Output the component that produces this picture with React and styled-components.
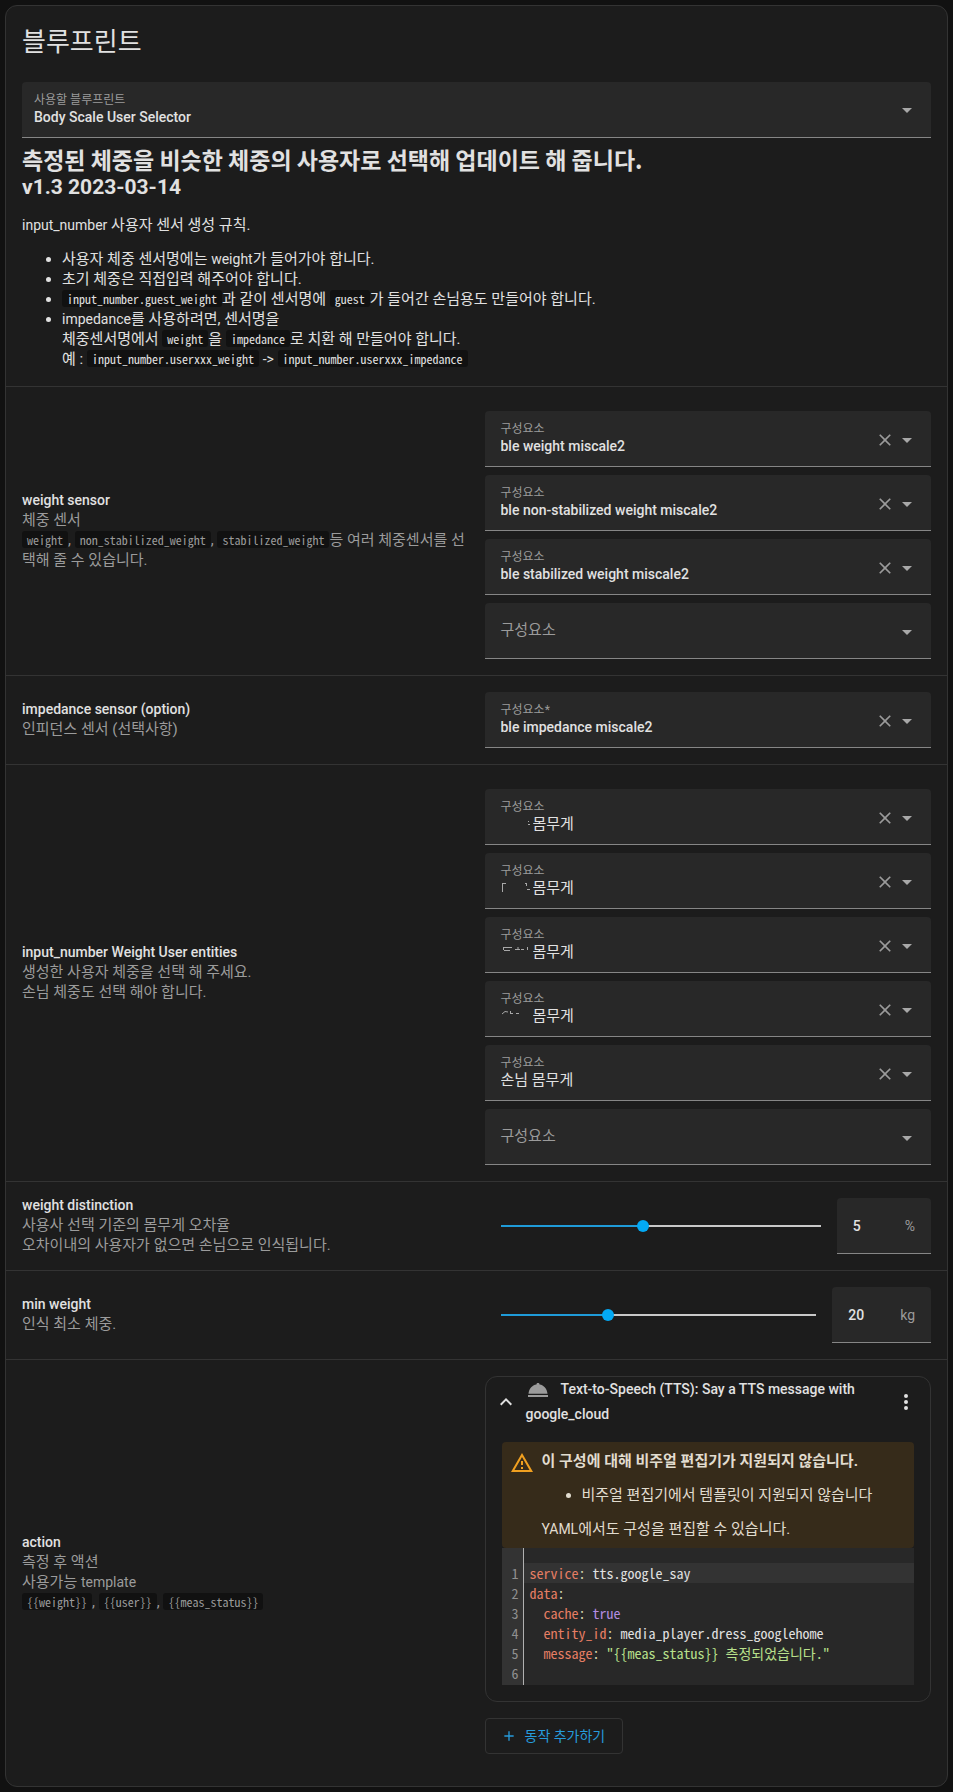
import React, { useId, useState } from "react";
import styled, { createGlobalStyle, css } from "styled-components";

const GlobalStyle = createGlobalStyle`
  *, *::before, *::after { box-sizing: border-box; }
  body {
    margin: 0;
    background: #111111;
    color: #e1e1e1;
    font-family: Roboto, "Noto Sans CJK KR", sans-serif;
    font-size: 14px;
    line-height: 20px;
  }
  button, input, select { font: inherit; color: inherit; }
`;

const Page = styled.main`
  padding: 5px;
`;

const Card = styled.section`
  background: #1c1c1c;
  border: 1px solid #333333;
  border-radius: 12px;
  overflow: hidden;
`;

const CardTitle = styled.h1`
  margin: 0;
  padding: 12px 16px 16px;
  font-size: 26px;
  line-height: 48px;
  font-weight: 400;
`;

const Intro = styled.div`
  padding: 0 16px 3px;
`;

const Heading = styled.h2`
  margin: 7px 0 14px;
  font-size: 21px;
  line-height: 28px;
  font-weight: 700;
`;

const HeadingKo = styled.span`
  display: block;
  font-family: "Noto Sans CJK KR", sans-serif;
  font-size: 23px;
`;

const Paragraph = styled.p`
  margin: 0;
  font-size: 15px;
`;

const BulletList = styled.ul`
  margin: 14px 0;
  padding-left: 40px;
  font-size: 15px;
`;

const Latin = styled.span`
  font-size: 14px;
`;

const Code = styled.code`
  padding: 0 5px;
  border-radius: 3px;
  background: #111111;
  font-family: "Noto Sans Mono CJK KR", "Liberation Mono", monospace;
  font-size: 12px;
  line-height: 16px;
`;

const Row = styled.div`
  display: grid;
  grid-template-columns: minmax(0, 1fr) minmax(0, 1fr);
  column-gap: 16px;
  align-items: center;
  padding: 0 16px;
  border-top: 1px solid #333333;
`;

const RowTitle = styled.h3`
  margin: 0;
  font-size: 14px;
  line-height: 20px;
  font-weight: 500;
`;

const RowText = styled.div`
  color: #9b9b9b;
  font-size: 15px;
`;

const FieldList = styled.div`
  display: grid;
  gap: 8px;
  padding: ${(p) => (p.$single ? 16 : 24)}px 0 16px;
`;

const Description = styled.div`
  padding-bottom: 2px;
`;

const Field = styled.div`
  display: flex;
  align-items: center;
  height: 56px;
  padding: 0 12px 0 ${(p) => (p.$inset ? 12 : 16)}px;
  background: #282828;
  border-bottom: 1px solid #868686;
  border-radius: 4px 4px 0 0;
`;

const FieldText = styled.div`
  flex: 1;
  min-width: 0;
  display: grid;
  align-content: center;
  ${(p) =>
    p.$empty
      ? css`
          padding-bottom: 2px;
          & > * {
            grid-area: 1 / 1;
          }
        `
      : css`
          padding-top: 1px;
        `}
`;

const FieldLabel = styled.label`
  color: #9b9b9b;
  font-size: ${(p) => (p.$large ? 15 : 12)}px;
  line-height: ${(p) => (p.$large ? 20 : 14)}px;
  pointer-events: none;
`;

const ValueRow = styled.div`
  display: flex;
  align-items: center;
`;

const Select = styled.select`
  appearance: none;
  flex: 1;
  min-width: 0;
  height: 20px;
  padding: 0;
  border: 0;
  outline: 0;
  background: transparent;
  font-size: ${(p) => (p.$korean ? 15 : 14)}px;
  line-height: 20px;
  font-weight: ${(p) => (p.$korean ? 400 : 500)};
`;

const Adornments = styled.div`
  display: flex;
  align-items: center;
  padding-top: ${(p) => (p.$inset ? 0 : 2)}px;
`;

const IconButton = styled.button`
  display: flex;
  align-items: center;
  justify-content: center;
  flex: none;
  padding: 0;
  border: 0;
  background: none;
  color: ${(p) => p.$color || "#9b9b9b"};
`;

const Svg = styled.svg`
  display: block;
  flex: none;
  fill: currentColor;
  color: ${(p) => p.$color || "inherit"};
`;

const icons = {
  menuDown: "M7,10L12,15L17,10H7Z",
  close:
    "M19,6.41L17.59,5L12,10.59L6.41,5L5,6.41L10.59,12L5,17.59L6.41,19L12,13.41L17.59,19L19,17.59L13.41,12L19,6.41Z",
  chevronUp: "M7.41,15.41L12,10.83L16.59,15.41L18,14L12,8L6,14L7.41,15.41Z",
  dots: "M12,16A2,2 0 0,1 14,18A2,2 0 0,1 12,20A2,2 0 0,1 10,18A2,2 0 0,1 12,16M12,10A2,2 0 0,1 14,12A2,2 0 0,1 12,14A2,2 0 0,1 10,12A2,2 0 0,1 12,10M12,4A2,2 0 0,1 14,6A2,2 0 0,1 12,8A2,2 0 0,1 10,6A2,2 0 0,1 12,4Z",
  alert: "M12,2L1,21H23M12,6L19.53,19H4.47M11,10V14H13V10M11,16V18H13V16",
  bell: "M12 5C13.1 5 13.7 5.6 13.5 6.6C18 7.2 21 11 21.5 15.8H2.5C3 11 6 7.2 10.5 6.6C10.3 5.6 10.9 5 12 5ZM2 17H22V19H2Z",
  plus: "M19,13H13V19H11V13H5V11H11V5H13V11H19V13Z",
};

function Icon({ name, size = 24, color }) {
  return (
    <Svg width={size} height={size} viewBox="0 0 24 24" $color={color} aria-hidden="true">
      <path d={icons[name]} fillRule="evenodd" />
    </Svg>
  );
}

const fragmentPaths = {
  a: "M27 5.500h1M27 8.500h2",
  b: "M1 3.500h4M1.500 3v9M24 3.500h2M25.500 4v2M26 9.500h3",
  c: "M2 3.500h9M2.500 3v3M3 6.500h6M14 5.500h5M17 3v2M20 5.500h3M26.500 3v3",
  d: "M1 6q3-4 6-2M9.500 3v3M10 5.500h2M15 5.500h3",
};

const Fragment = styled.svg`
  flex: none;
  width: 32px;
  height: 16px;
  fill: none;
  stroke: #a8a8a8;
`;

function Picker({ label = "구성요소", value = "", korean, fragment, clearable = true, inset }) {
  const id = useId();
  const empty = !value;
  return (
    <Field $inset={inset}>
      <FieldText $empty={empty}>
        <FieldLabel htmlFor={id} $large={empty}>
          {label}
        </FieldLabel>
        <ValueRow>
          {fragment && (
            <Fragment viewBox="0 0 32 16" aria-hidden="true">
              <path d={fragmentPaths[fragment]} />
            </Fragment>
          )}
          <Select id={id} $korean={korean} defaultValue={value}>
            <option value={value}>{value}</option>
          </Select>
        </ValueRow>
      </FieldText>
      <Adornments $inset={inset}>
        {!empty && clearable && (
          <IconButton type="button" aria-label="지우기">
            <Icon name="close" size={20} />
          </IconButton>
        )}
        <Icon name="menuDown" color="#a8a8a8" />
      </Adornments>
    </Field>
  );
}

const SliderRow = styled.div`
  display: flex;
  align-items: center;
  gap: 16px;
  padding: 16px 0 16px 16px;
`;

const Range = styled.input`
  appearance: none;
  flex: 1;
  min-width: 0;
  height: 12px;
  margin: 0;
  background: transparent;
  &::-webkit-slider-runnable-track {
    height: 2px;
    background: linear-gradient(
      to right,
      #1f9bd8 var(--filled),
      #c8c8c8 var(--filled)
    );
  }
  &::-webkit-slider-thumb {
    appearance: none;
    width: 12px;
    height: 12px;
    margin-top: -5px;
    border-radius: 50%;
    background: #03a9f4;
  }
`;

const NumberField = styled.label`
  display: flex;
  align-items: center;
  height: 56px;
  padding: 0 16px;
  background: #282828;
  border-bottom: 1px solid #868686;
  border-radius: 4px 4px 0 0;
  color: #9b9b9b;
`;

const NumberInput = styled.input`
  appearance: textfield;
  width: 52px;
  padding: 0;
  border: 0;
  outline: 0;
  background: transparent;
  color: #e1e1e1;
  font-weight: 500;
  &::-webkit-inner-spin-button {
    appearance: none;
  }
`;

function NumberSlider({ label, min, max, initial, unit }) {
  const [value, setValue] = useState(initial);
  const onChange = (e) => setValue(Number(e.target.value));
  const filled = ((value - min) / (max - min)) * 100;
  return (
    <SliderRow>
      <Range
        type="range"
        aria-label={label}
        min={min}
        max={max}
        value={value}
        onChange={onChange}
        style={{ "--filled": `${filled}%` }}
      />
      <NumberField>
        <NumberInput type="number" aria-label={label} value={value} onChange={onChange} />
        {unit}
      </NumberField>
    </SliderRow>
  );
}

const Actions = styled.div`
  padding: 16px 0 32px;
`;

const ActionCard = styled.article`
  border: 1px solid #333333;
  border-radius: 12px;
`;

const ActionHeader = styled.header`
  display: flex;
  align-items: center;
  padding: 0 12px 0 8px;
`;

const ActionTitle = styled.h3`
  flex: 1;
  margin: 0;
  padding: 0 24px 0 8px;
  font-size: 14px;
  line-height: 25px;
  font-weight: 500;
`;

const TitleIcon = styled.span`
  display: inline-block;
  margin-right: 11px;
  vertical-align: middle;
`;

const ActionBody = styled.div`
  padding: 15px 16px 16px;
`;

const Alert = styled.div`
  display: flex;
  gap: 8px;
  padding: 9px 8px;
  border-radius: 4px;
  background: #362b1a;
  color: #e1dccf;
  font-size: 15px;
`;

const AlertTitle = styled.strong`
  display: block;
  font-weight: 700;
`;

const Editor = styled.div`
  display: grid;
  grid-template-columns: 22px minmax(0, 1fr);
  background: #282828;
  font-family: "Noto Sans Mono CJK KR", "Liberation Mono", monospace;
  font-size: 14px;
  line-height: 20px;
`;

const Gutter = styled.div`
  padding: 15px 4px 2px 0;
  border-right: 1px solid #b0b0b0;
  background: #333333;
  color: #909090;
  text-align: right;
`;

const Lines = styled.div`
  padding: 15px 0 2px;
`;

const Line = styled.div`
  height: 20px;
  padding-left: 6px;
  white-space: pre;
  background: ${(p) => (p.$active ? "#333333" : "transparent")};
`;

const tokenColors = { key: "#e67e64", bool: "#b48ce0", string: "#b9e08c", mark: "#d6d6b0" };

const Token = styled.span`
  color: ${(p) => tokenColors[p.$kind]};
`;

const yaml = [
  [["key", "service"], ["mark", ":"], [null, " tts.google_say"]],
  [["key", "data"], ["mark", ":"]],
  [["key", "  cache"], ["mark", ":"], ["bool", " true"]],
  [["key", "  entity_id"], ["mark", ":"], [null, " media_player.dress_googlehome"]],
  [["key", "  message"], ["mark", ":"], ["string", ' "{{meas_status}} 측정되었습니다."']],
  [],
];

const AddButton = styled.button`
  display: inline-flex;
  align-items: center;
  gap: 8px;
  height: 36px;
  margin-top: 16px;
  padding: 0 17px 0 15px;
  border: 1px solid #333333;
  border-radius: 4px;
  background: transparent;
  color: #269bdb;
`;

export default function App() {
  return (
    <Page>
      <GlobalStyle />
      <Card>
        <CardTitle>블루프린트</CardTitle>
        <Intro>
          <Picker label="사용할 블루프린트" value="Body Scale User Selector" clearable={false} inset />
          <Heading>
            <HeadingKo>측정된 체중을 비슷한 체중의 사용자로 선택해 업데이트 해 줍니다.</HeadingKo>
            v1.3 2023-03-14
          </Heading>
          <Paragraph>
            <Latin>input_number</Latin> 사용자 센서 생성 규칙.
          </Paragraph>
          <BulletList>
            <li>
              사용자 체중 센서명에는 <Latin>weight</Latin>가 들어가야 합니다.
            </li>
            <li>초기 체중은 직접입력 해주어야 합니다.</li>
            <li>
              <Code>input_number.guest_weight</Code>과 같이 센서명에 <Code>guest</Code>가 들어간 손님용도
              만들어야 합니다.
            </li>
            <li>
              <Latin>impedance</Latin>를 사용하려면, 센서명을
              <br />
              체중센서명에서 <Code>weight</Code>을 <Code>impedance</Code>로 치환 해 만들어야 합니다.
              <br />예 : <Code>input_number.userxxx_weight</Code> <Latin>-&gt;</Latin>{" "}
              <Code>input_number.userxxx_impedance</Code>
            </li>
          </BulletList>
        </Intro>

        <Row>
          <Description>
            <RowTitle>weight sensor</RowTitle>
            <RowText>
              체중 센서
              <br />
              <Code>weight</Code>, <Code>non_stabilized_weight</Code>, <Code>stabilized_weight</Code>등 여러
              체중센서를 선택해 줄 수 있습니다.
            </RowText>
          </Description>
          <FieldList>
            <Picker value="ble weight miscale2" />
            <Picker value="ble non-stabilized weight miscale2" />
            <Picker value="ble stabilized weight miscale2" />
            <Picker />
          </FieldList>
        </Row>

        <Row>
          <Description>
            <RowTitle>impedance sensor (option)</RowTitle>
            <RowText>인피던스 센서 (선택사항)</RowText>
          </Description>
          <FieldList $single>
            <Picker label="구성요소*" value="ble impedance miscale2" />
          </FieldList>
        </Row>

        <Row>
          <Description>
            <RowTitle>input_number Weight User entities</RowTitle>
            <RowText>
              생성한 사용자 체중을 선택 해 주세요.
              <br />
              손님 체중도 선택 해야 합니다.
            </RowText>
          </Description>
          <FieldList>
            <Picker value="몸무게" korean fragment="a" />
            <Picker value="몸무게" korean fragment="b" />
            <Picker value="몸무게" korean fragment="c" />
            <Picker value="몸무게" korean fragment="d" />
            <Picker value="손님 몸무게" korean />
            <Picker />
          </FieldList>
        </Row>

        <Row>
          <Description>
            <RowTitle>weight distinction</RowTitle>
            <RowText>
              사용사 선택 기준의 몸무게 오차율
              <br />
              오차이내의 사용자가 없으면 손님으로 인식됩니다.
            </RowText>
          </Description>
          <NumberSlider label="weight distinction" min={1} max={10} initial={5} unit="%" />
        </Row>

        <Row>
          <Description>
            <RowTitle>min weight</RowTitle>
            <RowText>인식 최소 체중.</RowText>
          </Description>
          <NumberSlider label="min weight" min={0} max={60} initial={20} unit="kg" />
        </Row>

        <Row>
          <Description>
            <RowTitle>action</RowTitle>
            <RowText>
              측정 후 액션
              <br />
              사용가능 <Latin>template</Latin>
              <br />
              <Code>{"{{weight}}"}</Code>, <Code>{"{{user}}"}</Code>, <Code>{"{{meas_status}}"}</Code>
            </RowText>
          </Description>
          <Actions>
            <ActionCard>
              <ActionHeader>
                <IconButton type="button" aria-label="접기" $color="#e1e1e1">
                  <Icon name="chevronUp" />
                </IconButton>
                <ActionTitle>
                  <TitleIcon>
                    <Icon name="bell" color="#9b9b9b" />
                  </TitleIcon>
                  Text-to-Speech (TTS): Say a TTS message with google_cloud
                </ActionTitle>
                <IconButton type="button" aria-label="메뉴" $color="#e1e1e1">
                  <Icon name="dots" />
                </IconButton>
              </ActionHeader>
              <ActionBody>
                <Alert role="alert">
                  <Icon name="alert" color="#f0a020" />
                  <div>
                    <AlertTitle>이 구성에 대해 비주얼 편집기가 지원되지 않습니다.</AlertTitle>
                    <BulletList>
                      <li>비주얼 편집기에서 템플릿이 지원되지 않습니다</li>
                    </BulletList>
                    <Latin>YAML</Latin>에서도 구성을 편집할 수 있습니다.
                  </div>
                </Alert>
                <Editor>
                  <Gutter>
                    {yaml.map((_, i) => (
                      <div key={i}>{i + 1}</div>
                    ))}
                  </Gutter>
                  <Lines>
                    {yaml.map((tokens, i) => (
                      <Line key={i} $active={i === 0}>
                        {tokens.map(([kind, text], j) => (
                          <Token key={j} $kind={kind}>
                            {text}
                          </Token>
                        ))}
                      </Line>
                    ))}
                  </Lines>
                </Editor>
              </ActionBody>
            </ActionCard>
            <AddButton type="button">
              <Icon name="plus" size={16} />
              동작 추가하기
            </AddButton>
          </Actions>
        </Row>
      </Card>
    </Page>
  );
}
